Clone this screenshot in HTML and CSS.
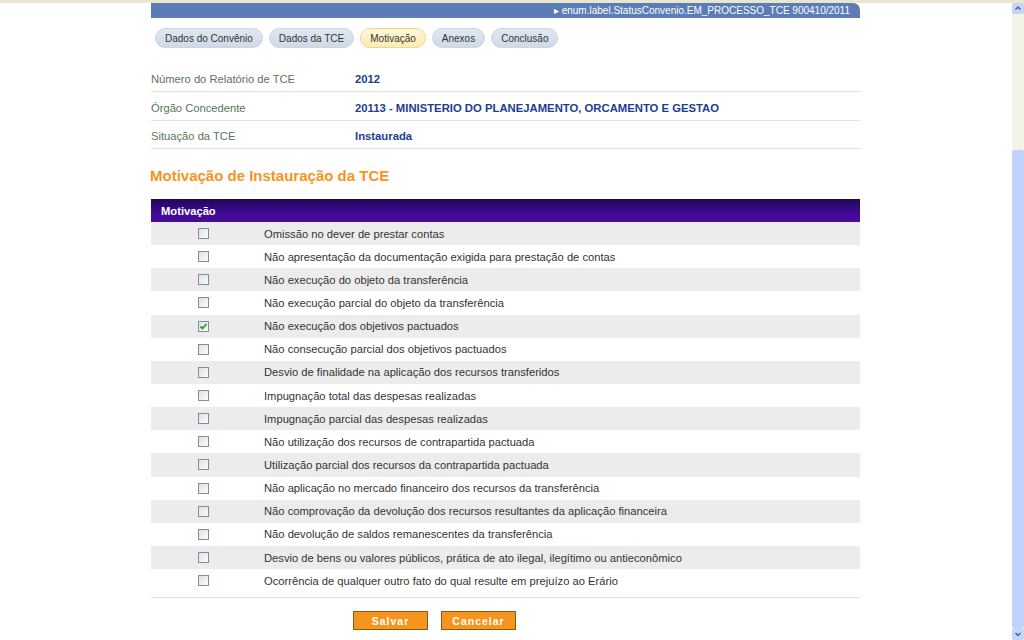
FILE: index.html
```html
<!DOCTYPE html>
<html lang="pt">
<head>
<meta charset="utf-8">
<title>Motivação</title>
<link rel="stylesheet" href="styles.css">
</head>
<body>
<div class="chrome-top"></div>
<div class="viewport">
  <div class="page">
    <div class="statusbar">▸ enum.label.StatusConvenio.EM_PROCESSO_TCE 900410/2011</div>
    <nav class="tabs">
      <span class="tab">Dados do Convênio</span>
      <span class="tab">Dados da TCE</span>
      <span class="tab active">Motivação</span>
      <span class="tab">Anexos</span>
      <span class="tab">Conclusão</span>
    </nav>
    <div class="info">
      <div class="info-row"><span class="label">Número do Relatório de TCE</span><span class="value">2012</span></div>
      <div class="info-row"><span class="label">Órgão Concedente</span><span class="value">20113 - MINISTERIO DO PLANEJAMENTO, ORCAMENTO E GESTAO</span></div>
      <div class="info-row"><span class="label">Situação da TCE</span><span class="value">Instaurada</span></div>
    </div>
    <h2 class="section-title">Motivação de Instauração da TCE</h2>
    <div class="grid">
      <div class="grid-head">Motivação</div>
      <div class="grid-row"><span class="cell-check"><span class="cb"></span></span><span class="cell-text">Omissão no dever de prestar contas</span></div>
      <div class="grid-row"><span class="cell-check"><span class="cb"></span></span><span class="cell-text">Não apresentação da documentação exigida para prestação de contas</span></div>
      <div class="grid-row"><span class="cell-check"><span class="cb"></span></span><span class="cell-text">Não execução do objeto da transferência</span></div>
      <div class="grid-row"><span class="cell-check"><span class="cb"></span></span><span class="cell-text">Não execução parcial do objeto da transferência</span></div>
      <div class="grid-row"><span class="cell-check"><span class="cb checked"><svg viewBox="0 0 9 9" width="9" height="9"><polyline points="1.5,4.5 3.5,6.5 7.5,2" fill="none" stroke="#21a121" stroke-width="1.8"/></svg></span></span><span class="cell-text">Não execução dos objetivos pactuados</span></div>
      <div class="grid-row"><span class="cell-check"><span class="cb"></span></span><span class="cell-text">Não consecução parcial dos objetivos pactuados</span></div>
      <div class="grid-row"><span class="cell-check"><span class="cb"></span></span><span class="cell-text">Desvio de finalidade na aplicação dos recursos transferidos</span></div>
      <div class="grid-row"><span class="cell-check"><span class="cb"></span></span><span class="cell-text">Impugnação total das despesas realizadas</span></div>
      <div class="grid-row"><span class="cell-check"><span class="cb"></span></span><span class="cell-text">Impugnação parcial das despesas realizadas</span></div>
      <div class="grid-row"><span class="cell-check"><span class="cb"></span></span><span class="cell-text">Não utilização dos recursos de contrapartida pactuada</span></div>
      <div class="grid-row"><span class="cell-check"><span class="cb"></span></span><span class="cell-text">Utilização parcial dos recursos da contrapartida pactuada</span></div>
      <div class="grid-row"><span class="cell-check"><span class="cb"></span></span><span class="cell-text">Não aplicação no mercado financeiro dos recursos da transferência</span></div>
      <div class="grid-row"><span class="cell-check"><span class="cb"></span></span><span class="cell-text">Não comprovação da devolução dos recursos resultantes da aplicação financeira</span></div>
      <div class="grid-row"><span class="cell-check"><span class="cb"></span></span><span class="cell-text">Não devolução de saldos remanescentes da transferência</span></div>
      <div class="grid-row"><span class="cell-check"><span class="cb"></span></span><span class="cell-text">Desvio de bens ou valores públicos, prática de ato ilegal, ilegítimo ou antieconômico</span></div>
      <div class="grid-row"><span class="cell-check"><span class="cb"></span></span><span class="cell-text">Ocorrência de qualquer outro fato do qual resulte em prejuízo ao Erário</span></div>
    </div>
    <div class="actions">
      <button class="btn">Salvar</button>
      <button class="btn">Cancelar</button>
    </div>
  </div>
  <div class="scrollbar">
    <div class="sb-btn up"><svg viewBox="0 0 12 11" width="12" height="11"><polyline points="3.5,6.5 6,4 8.5,6.5" fill="none" stroke="#4d6185" stroke-width="1.5"/></svg></div>
    <div class="sb-track"></div>
    <div class="sb-thumb"></div>
    <div class="sb-btn down"><svg viewBox="0 0 12 12" width="12" height="12"><polyline points="3.5,5 6,7.5 8.5,5" fill="none" stroke="#4d6185" stroke-width="1.5"/></svg></div>
  </div>
</div>
</body>
</html>
```

FILE: styles.css
```css
html, body {
  margin: 0;
  padding: 0;
  height: 640px;
  overflow: hidden;
  background: #fff;
  font-family: "Liberation Sans", Arial, sans-serif;
  font-size: 11.2px;
  color: #333;
}

.chrome-top {
  height: 3px;
  background: #e9e5cf;
}

.viewport {
  display: flex;
  height: 637px;
}

.page {
  flex: 1;
  padding-left: 151px;
  width: 709px;
  max-width: 709px;
}

.statusbar {
  height: 15px;
  line-height: 15px;
  background: #5b7cb6;
  color: #fff;
  font-size: 10px;
  text-align: right;
  padding-right: 10px;
  border-radius: 0 7px 0 0;
}

.tabs {
  display: flex;
  gap: 6px;
  padding: 10px 0 0 4px;
  height: 20px;
}

.tab {
  display: inline-block;
  height: 20px;
  line-height: 19px;
  box-sizing: border-box;
  padding: 0 9px;
  border-radius: 10px;
  font-size: 10px;
  color: #333;
  background: linear-gradient(#dfe7f1, #cfdae8);
  border: 1px solid #ccd7e5;
}

.tab.active {
  background: linear-gradient(#fff8da, #fcecb4);
  border-color: #f2d68e;
}

.info {
  margin-top: 15.5px;
}

.info-row {
  display: flex;
  align-items: center;
  height: 17px;
  padding: 7px 0 3.5px;
  border-bottom: 1px solid #e3e3e3;
}

.label {
  width: 204px;
  color: #587658;
}

.value {
  color: #1e3d8f;
  font-weight: bold;
  font-size: 11.3px;
}

.section-title {
  margin: 18px 0 0 -1px;
  font-size: 15px;
  line-height: 18px;
  color: #f7941d;
  font-weight: bold;
}

.grid {
  margin-top: 14px;
  border-bottom: 1px solid #e3e3e3;
  padding-bottom: 5px;
}

.grid-head {
  height: 23px;
  line-height: 24px;
  background: linear-gradient(#1c0856, #3f0a92 55%, #4a0ba0);
  color: #fff;
  font-weight: bold;
  padding-left: 10px;
}

.grid-row {
  display: flex;
  align-items: center;
  height: 23.15px;
}

.grid-row:nth-child(even) {
  background: #ececec;
}

.cell-check {
  width: 104px;
  display: flex;
  justify-content: center;
}

.cb {
  display: inline-flex;
  align-items: center;
  justify-content: center;
  box-sizing: border-box;
  width: 11px;
  height: 11px;
  border: 1px solid #7b8ea9;
  background: linear-gradient(135deg, #e2e2dc, #fbfbf8);
}

.cell-text {
  margin-left: 9px;
  color: #333;
}

.actions {
  display: flex;
  justify-content: center;
  gap: 13px;
  padding-top: 13px;
  padding-right: 142px;
}

.btn {
  width: 75px;
  height: 19px;
  padding: 0;
  background: #f7941d;
  border: 1px solid #8a5a1a;
  color: #fff;
  font-family: "Liberation Sans", Arial, sans-serif;
  font-size: 10.5px;
  font-weight: bold;
  letter-spacing: 1px;
}

.scrollbar {
  margin-left: auto;
  width: 12px;
  display: flex;
  flex-direction: column;
  background: #f4f3ec;
}

.sb-btn {
  height: 11px;
  background: #c6d5f7;
  border-radius: 2px;
  display: flex;
  align-items: center;
  justify-content: center;
}

.sb-btn.down {
  height: 12px;
}

.sb-track {
  height: 136px;
  background: #f4f3ea;
}

.sb-thumb {
  flex: 1;
  background: #c2d3fa;
  border-radius: 2px;
}
```
